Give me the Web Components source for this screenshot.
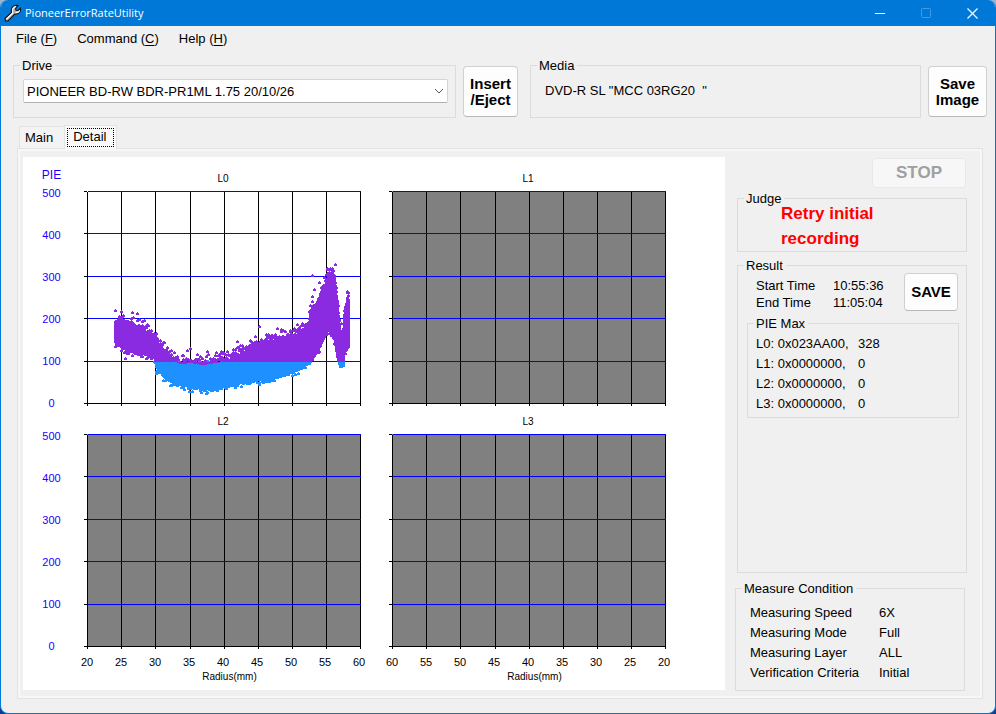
<!DOCTYPE html>
<html lang="en">
<head>
<meta charset="utf-8">
<title>PioneerErrorRateUtility</title>
<style>
  body {
    margin: 0;
    font: 13px/15px "Liberation Sans", Arial, sans-serif;
    color: #000;
    background: linear-gradient(#9ab4cc 50%, #0b3c91 50%);
  }
</style>
</head>
<body>
<app-window></app-window>

<script>
const define = (name, html, setup) => {
    const template = document.createElement('template');
    template.innerHTML = html;
    customElements.define(name, class extends HTMLElement {
        constructor() {
            super();
            this.attachShadow({ mode: 'open' }).append(template.content.cloneNode(true));
        }

        connectedCallback() {
            if (setup) setup(this, this.shadowRoot);
        }
    });
};

define('title-bar', `
  <style>
    :host { display: flex; align-items: center; height: 26px; background: #0078d7; color: #fff; font: 11px/16px "Open Sans", "Noto Sans", sans-serif; }
    .logo { margin: 0 3px; }
    h1 { flex: 1; margin: 0; font: inherit; }
    button { width: 46px; height: 26px; padding: 0; border: 0; background: none; color: #fff; }
    button svg { display: block; margin: auto; }
    button:disabled { color: #3f9be6; }
  </style>
  <svg class="logo" width="18" height="18" viewBox="0 0 18 18" aria-hidden="true">
    <path d="M1 14.500L7.500 8.500C6.500 5 8.600 1.500 12 1.200L14 1.600L11.600 4.200L12 6.200L14.200 6.500L16.500 4.200C17.200 7.600 14.500 10.800 10.800 10.200L4 17L1.500 17Z" fill="#a8a8a8" stroke="#111" stroke-width="1.100"/>
    <path d="M2.300 15.200L8.800 9C8 5.600 9.400 3 12 2.300M11.500 8.200C13.500 8.800 15 8 15.700 6.500" fill="none" stroke="#fff" stroke-width="1.200"/>
  </svg>
  <h1><slot></slot></h1>
  <button aria-label="Minimize"><svg width="10" height="10"><path d="M0 5.500h10" stroke="currentColor"/></svg></button>
  <button aria-label="Maximize" disabled><svg width="10" height="10"><rect x=".5" y=".5" width="9" height="9" rx="1" fill="none" stroke="currentColor"/></svg></button>
  <button aria-label="Close"><svg width="11" height="11"><path d="M.5 .5l10 10M10.500 .5l-10 10" stroke="currentColor" stroke-width="1.200"/></svg></button>
`);

define('menu-bar', `
  <style>
    :host { display: block; }
    nav { display: flex; gap: 20px; padding: 0 15px; }
    button { padding: 0; border: 0; background: none; font: inherit; line-height: 25px; color: inherit; }
    u { text-underline-offset: 2px; }
  </style>
  <nav>
    <button>File (<u>F</u>)</button>
    <button>Command (<u>C</u>)</button>
    <button>Help (<u>H</u>)</button>
  </nav>
`);

define('group-box', `
  <style>
    :host { display: flex; }
    fieldset { flex: 1; min-width: 0; margin: 0; padding: 0; border: 1px solid #dcdcdc; }
    legend { margin-left: 6px; padding: 1px 3px 0 2px; }
  </style>
  <fieldset>
    <legend></legend>
    <slot></slot>
  </fieldset>
`, (host, root) => {
    root.querySelector('legend').textContent = host.getAttribute('label');
});

define('push-button', `
  <style>
    :host { display: flex; }
    button {
      flex: 1; padding: 0; border: 1px solid #d0d0d0; border-bottom-color: #b8b8b8; border-radius: 4px;
      background: #fdfdfd; color: #000; font: bold 15px/16px "Liberation Sans", Arial, sans-serif;
    }
    button:disabled { border-color: #e8e8e8; background: #f7f7f7; color: #a0a0a0; font-size: 17px; }
  </style>
  <button><slot></slot></button>
`, (host, root) => {
    root.querySelector('button').disabled = host.hasAttribute('disabled');
});

define('drive-select', `
  <style>
    :host { display: grid; align-items: center; }
    select, svg { grid-area: 1 / 1; }
    select {
      appearance: none; width: 100%; height: 24px; padding: 0 24px 0 3px; border: 1px solid #d5d5d5;
      border-bottom-color: #b0b0b0; border-radius: 2px; background: #fff; color: #000; font: inherit;
    }
    svg { justify-self: end; margin-right: 4px; pointer-events: none; }
  </style>
  <select aria-label="Drive">
    <option>PIONEER BD-RW BDR-PR1ML 1.75 20/10/26</option>
  </select>
  <svg width="10" height="6" aria-hidden="true"><path d="M1 1l4 4l4-4" fill="none" stroke="#555"/></svg>
`);

define('tab-strip', `
  <style>
    :host { display: flex; align-items: flex-end; padding-left: 2px; }
    button { padding: 3px 11px 3px 5px; border: 1px solid #e3e3e3; border-bottom: 0; border-right: 0; background: #f3f3f3; font: inherit; color: inherit; }
    button[aria-selected=true] { margin-bottom: -1px; padding: 2px; border-right: 1px solid #e3e3e3; background: #f9f9f9; position: relative; }
    span { display: block; }
    [aria-selected=true] span { padding: 0 7px 2px 5px; border: 1px dotted #000; }
  </style>
  <button role="tab" aria-selected="false"><span>Main</span></button>
  <button role="tab" aria-selected="true"><span>Detail</span></button>
`);

define('pie-axis', `
  <style>
    :host { display: grid; grid-template-rows: var(--head) 1fr var(--foot); width: 61px; color: #1a00ff; text-align: center; }
    header { align-self: end; padding: 0 4px 8px 0; font-size: 12px; line-height: 16px; }
    ol { display: flex; flex-direction: column; justify-content: space-between; margin: -6px 0 -4px; padding: 0 4px 0 0; list-style: none; font-size: 11px; line-height: 16px; }
  </style>
  <header><slot></slot></header>
  <ol><li>500</li><li>400</li><li>300</li><li>200</li><li>100</li><li>0</li></ol>
`);

define('layer-chart', `
  <style>
    :host { display: block; flex: 1; }
    header { display: grid; align-content: end; height: var(--head); padding-bottom: 4px; box-sizing: border-box; text-align: center; font-size: 10px; line-height: 16px; }
    svg { display: block; width: 100%; height: auto; }
    footer { height: var(--foot); padding-top: 5px; box-sizing: border-box; text-align: center; font-size: 10px; line-height: 15px; }
    ol { display: flex; margin: 0 -14px; padding: 0; list-style: none; font-size: 11px; line-height: 14px; }
    li { flex: 1; }
    .unit { padding-left: 13px; }
  </style>
  <header></header>
  <svg viewBox="-3 0 278 216" shape-rendering="crispEdges" role="img"></svg>
`, (host, root) => {
    const label = host.getAttribute('label');
    const svg = root.querySelector('svg');
    root.querySelector('header').textContent = label;
    svg.setAttribute('aria-label', `${label} error rate`);

    const xs = [0, 34, 68, 103, 137, 171, 205, 239, 273];
    const ys = [0, 42, 85, 127, 170, 212];
    const blue = ys.slice(0, 5).map(y => `<rect x="1" y="${y}" width="273" height="1" fill="#00f"/>`).join('');
    const black = xs.map(x => `<rect x="${x}" y="1" width="1" height="214"/>`).join('')
        + ys.map(y => `<rect x="-3" y="${y}" width="3" height="1"/>`).join('')
        + '<rect x="-3" y="212" width="277" height="1"/>';
    svg.innerHTML = `
      ${host.hasAttribute('empty') ? '<rect width="274" height="213" fill="#808080"/>' : ''}
      ${black}
      ${blue}
      ${host.hasAttribute('empty') ? '' : scatter()}
    `;

    if (host.hasAttribute('ticks')) {
        const ticks = host.getAttribute('ticks').split(' ').map(t => `<li>${t}</li>`).join('');
        svg.insertAdjacentHTML('afterend', `<footer><ol>${ticks}</ol><div class="unit">Radius(mm)</div></footer>`);
    }
});

// lowest and highest error rate along the radius: [x, top, bottom] in plot units
const ENVELOPE = [
    [28, 127, 153], [34, 128, 158], [43, 131, 163], [56, 134, 165], [67, 143, 169], [69, 146, 178],
    [76, 155, 187], [84, 164, 193], [93, 169, 196], [103, 168, 198], [116, 170, 200], [133, 167, 198],
    [143, 164, 196], [160, 155, 193], [173, 149, 191], [186, 147, 189], [200, 144, 185], [213, 138, 180],
    [221, 132, 174], [223, 119, 172], [227, 115, 167], [233, 103, 156], [238, 90, 146], [241, 79, 140],
    [247, 81, 150], [250, 110, 168], [253, 139, 178], [256, 137, 177], [257, 120, 164], [260, 104, 157], [262, 104, 155]
];
const OUTLIERS = [
    [225, 85], [248, 74], [232, 92], [227, 99], [225, 106], [28, 120], [45, 122], [50, 123], [172, 136],
    [150, 151], [103, 158], [120, 161], [190, 138], [194, 139], [172, 194], [139, 198], [205, 185],
    [69, 183], [28, 156], [34, 121], [240, 78], [243, 78], [245, 78], [38, 168], [260, 102], [225, 111],
    [234, 97], [237, 87], [196, 140], [203, 140], [179, 144], [168, 146], [134, 161], [129, 162],
    [260, 113], [258, 124], [46, 127], [57, 130], [84, 160], [100, 160]
];

function scatter() {
    const limit = 171;
    const paths = { high: '', low: '' };
    let seed = 7;
    const random = () => (seed = (seed * 16807) % 2147483647) / 2147483647;
    const mark = (x, y) => {
        paths[y < limit ? 'high' : 'low'] += `M${x} ${y - 2}h1v1h1v2h-3v-2h1z`;
    };

    for (let i = 1; i < ENVELOPE.length; i++) {
        const [x0, top0, bottom0] = ENVELOPE[i - 1];
        const [x1, top1, bottom1] = ENVELOPE[i];
        for (let x = x0; x < x1; x++) {
            const k = (x - x0) / (x1 - x0);
            const top = Math.round(top0 + (top1 - top0) * k);
            const bottom = Math.round(bottom0 + (bottom1 - bottom0) * k);
            if (top < limit) paths.high += `M${x - 1} ${top + 4}h3V${Math.min(bottom - 1, limit)}h-3z`;
            if (bottom > limit) paths.low += `M${x - 1} ${Math.max(top, limit)}h3V${bottom - 1}h-3z`;
            mark(x, top + Math.round(4 - random() ** 2 * 9));
            mark(x, top + Math.round(random() * 5));
            mark(x, bottom - Math.round(2 - random() ** 3 * 5));
        }
    }
    OUTLIERS.forEach(([x, y]) => mark(x, y));
    return `<path d="${paths.low}" fill="#1e90ff"/><path d="${paths.high}" fill="#8a2be2"/>`;
}

define('chart-panel', `
  <style>
    :host { display: block; padding-right: 58px; background: #fff; }
    .row { display: flex; --head: 34px; --foot: 0px; }
    .row + .row { --head: 27px; --foot: 40px; }
    layer-chart + layer-chart { margin-left: 27px; }
  </style>
  <div class="row">
    <pie-axis>PIE</pie-axis>
    <layer-chart label="L0"></layer-chart>
    <layer-chart label="L1" empty></layer-chart>
  </div>
  <div class="row">
    <pie-axis></pie-axis>
    <layer-chart label="L2" empty ticks="20 25 30 35 40 45 50 55 60"></layer-chart>
    <layer-chart label="L3" empty ticks="60 55 50 45 40 35 30 25 20"></layer-chart>
  </div>
`);

define('result-panel', `
  <style>
    :host { display: flex; flex-direction: column; box-sizing: border-box; width: 257px; padding: 1px 15px 0 12px; }
    .stop { align-self: flex-end; width: 94px; height: 30px; margin: 0 1px 2px; }
    .judge { height: 62px; margin-bottom: 5px; }
    .judge p { margin: -5px 0 0 43px; color: #f00; font: bold 17px/25px "Liberation Sans", Arial, sans-serif; }
    .result { flex: 1; margin-bottom: 7px; }
    .times { display: flex; justify-content: space-between; padding: 0 8px 0 18px; }
    .times dl { display: grid; grid-template-columns: 77px auto; margin: 4px 0 0; line-height: 17px; }
    dd { margin: 0; }
    .save { width: 54px; height: 38px; }
    .max { margin: 4px 7px 0 9px; }
    table { margin: 3px 0 3px 8px; border-collapse: collapse; line-height: 20px; }
    td, th { padding: 0; font-weight: normal; text-align: left; }
    th { width: 102px; }
    .condition { margin: 0 2px -1px -2px; }
    .condition dl { display: grid; grid-template-columns: 129px auto; margin: 7px 0 7px 14px; line-height: 20px; }
  </style>
  <push-button class="stop" disabled>STOP</push-button>
  <group-box class="judge" label="Judge"><p>Retry initial<br>recording</p></group-box>
  <group-box class="result" label="Result">
    <div class="times">
      <dl><dt>Start Time</dt><dd>10:55:36</dd><dt>End Time</dt><dd>11:05:04</dd></dl>
      <push-button class="save">SAVE</push-button>
    </div>
    <group-box class="max" label="PIE Max">
      <table>
        <tr><th>L0: 0x023AA00,</th><td>328</td></tr>
        <tr><th>L1: 0x0000000,</th><td>0</td></tr>
        <tr><th>L2: 0x0000000,</th><td>0</td></tr>
        <tr><th>L3: 0x0000000,</th><td>0</td></tr>
      </table>
    </group-box>
  </group-box>
  <group-box class="condition" label="Measure Condition">
    <dl>
      <dt>Measuring Speed</dt><dd>6X</dd>
      <dt>Measuring Mode</dt><dd>Full</dd>
      <dt>Measuring Layer</dt><dd>ALL</dd>
      <dt>Verification Criteria</dt><dd>Initial</dd>
    </dl>
  </group-box>
`);

define('app-window', `
  <style>
    :host {
      display: flex; flex-direction: column; box-sizing: border-box; min-height: 100vh; overflow: hidden;
      border: 1px solid #0078d7; border-top: 0; border-radius: 8px; background: #f0f0f0;
    }
    .top { display: flex; align-items: flex-end; padding: 6px 8px 0 12px; }
    .drive { flex: 443; }
    .media { flex: 391; margin-left: 12px; }
    drive-select { margin: 6px 7px 14px 9px; }
    .media p { margin: 10px 0 19px 14px; white-space: pre; }
    .eject { width: 55px; height: 51px; margin: 0 0 1px 7px; }
    .image { width: 59px; height: 51px; margin: 0 0 1px 7px; }
    main { flex: 1; display: flex; flex-direction: column; padding: 7px 12px 14px 16px; }
    .page { flex: 1; display: flex; padding: 8px 0 8px 5px; border: 1px solid #e3e3e3; box-shadow: inset 0 0 0 2px #f7f7f7; }
    chart-panel { flex: 1; }
  </style>
  <title-bar>PioneerErrorRateUtility</title-bar>
  <menu-bar></menu-bar>
  <div class="top">
    <group-box class="drive" label="Drive"><drive-select></drive-select></group-box>
    <push-button class="eject">Insert<br>/Eject</push-button>
    <group-box class="media" label="Media"><p>DVD-R SL "MCC 03RG20  "</p></group-box>
    <push-button class="image">Save<br>Image</push-button>
  </div>
  <main>
    <tab-strip role="tablist"></tab-strip>
    <div class="page" role="tabpanel" aria-label="Detail">
      <chart-panel></chart-panel>
      <result-panel></result-panel>
    </div>
  </main>
`);
</script>
</body>
</html>
